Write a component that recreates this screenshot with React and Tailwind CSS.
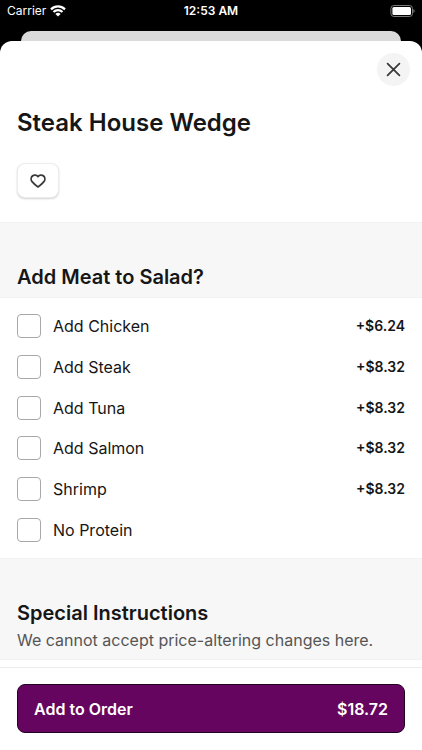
import { useState } from 'react'

const options = [
  { id: 'chicken', name: 'Add Chicken', price: '+$6.24' },
  { id: 'steak', name: 'Add Steak', price: '+$8.32' },
  { id: 'tuna', name: 'Add Tuna', price: '+$8.32' },
  { id: 'salmon', name: 'Add Salmon', price: '+$8.32' },
  { id: 'shrimp', name: 'Shrimp', price: '+$8.32' },
  { id: 'none', name: 'No Protein', price: null },
]

function WifiIcon() {
  return (
    <svg width="16" height="12" viewBox="0 0 16 12" fill="none" stroke="white" strokeWidth="2.2">
      <path d="M1 4.4C5 0.4 11 0.4 15 4.4" />
      <path d="M3.5 7C6 4.5 10 4.5 12.5 7" />
      <path d="M8 11.6L5.4 8.9C6.8 7.5 9.2 7.5 10.6 8.9Z" fill="white" stroke="none" />
    </svg>
  )
}

function BatteryIcon() {
  return (
    <svg width="25" height="12" viewBox="0 0 25 12" fill="none">
      <rect x="0.9" y="0.5" width="21.6" height="11" rx="3" stroke="#7a7a7a" />
      <rect x="2.4" y="2" width="18.6" height="8" rx="1.5" fill="white" />
      <path d="M23.4 4C25 4.6 25 7.4 23.4 8Z" fill="#7a7a7a" />
    </svg>
  )
}

export default function App() {
  const [selected, setSelected] = useState([])
  const [liked, setLiked] = useState(false)

  const toggle = (id) =>
    setSelected(selected.includes(id) ? selected.filter((s) => s !== id) : [...selected, id])

  return (
    <div className="min-h-screen flex flex-col bg-black text-[#161616] font-['Inter',sans-serif]">
      {/* Status Bar */}
      <div className="grid grid-cols-3 items-center h-[22px] px-[7px] text-xs text-white">
        <div className="flex items-center gap-1">
          <span>Carrier</span>
          <WifiIcon />
        </div>
        <span className="text-center font-semibold">12:53 AM</span>
        <div className="flex justify-end">
          <BatteryIcon />
        </div>
      </div>

      {/* Screen behind the sheet */}
      <div className="mt-[9px] mx-[21px] h-[10px] rounded-t-[10px] bg-[#dadada]" />

      {/* Sheet */}
      <main className="flex-1 flex flex-col rounded-t-[12px] bg-white overflow-hidden">
        <div className="flex justify-end pt-3 pr-3">
          <button aria-label="Close" className="w-[33px] h-[33px] rounded-full bg-[#f4f4f4] flex items-center justify-center">
            <svg width="15" height="15" viewBox="0 0 15 15" stroke="#3a3a3a" strokeWidth="1.8" strokeLinecap="round">
              <path d="M1.6 1.6L13.4 13.4M13.4 1.6L1.6 13.4" />
            </svg>
          </button>
        </div>

        <div className="px-[17px] pt-[21px] pb-6">
          <h1 className="text-2xl font-semibold">Steak House Wedge</h1>
          <button
            aria-label="Save to favorites"
            aria-pressed={liked}
            onClick={() => setLiked(!liked)}
            className="mt-6 w-[42px] h-[35px] rounded-lg border border-[#ececec] bg-white shadow-[0_1px_2px_rgba(0,0,0,0.18)] flex items-center justify-center"
          >
            <svg width="16" height="14" viewBox="0 0 16 14" fill={liked ? '#3a3a3a' : 'none'} stroke="#3a3a3a" strokeWidth="1.8" strokeLinejoin="round">
              <path d="M8 2.6C6.6 0.7 4 0.6 2.4 2C0.7 3.6 0.8 6.2 2.3 7.9C3.8 9.7 6 11.6 8 12.9C10 11.6 12.2 9.7 13.7 7.9C15.2 6.2 15.3 3.6 13.6 2C12 0.6 9.4 0.7 8 2.6Z" />
            </svg>
          </button>
        </div>

        {/* Options */}
        <div className="px-[17px] pt-10 pb-1.5 bg-[#f7f7f7] border-y border-[#f1f1f1]">
          <h2 className="text-xl font-semibold">Add Meat to Salad?</h2>
        </div>
        <ul className="grid auto-rows-fr h-[260px] px-[17px] py-2">
          {options.map((option) => (
            <li key={option.id}>
              <label className="h-full flex items-center gap-3">
                <input
                  type="checkbox"
                  checked={selected.includes(option.id)}
                  onChange={() => toggle(option.id)}
                  className="appearance-none w-6 h-6 rounded-[4px] border border-[#a8a8a8] bg-white checked:bg-[#660560]"
                />
                <span className="flex-1 text-base">{option.name}</span>
                {option.price && <span className="text-sm font-semibold">{option.price}</span>}
              </label>
            </li>
          ))}
        </ul>

        {/* Special Instructions */}
        <div className="px-[17px] pt-10 pb-1.5 bg-[#f7f7f7] border-y border-[#f1f1f1]">
          <h2 className="text-xl font-semibold">Special Instructions</h2>
          <p className="text-base leading-[26px] text-[#555555]">We cannot accept price-altering changes here.</p>
        </div>

        {/* Order Bar */}
        <div className="mt-[7px] px-[17px] py-4 border-t border-[#ececec]">
          <button className="w-full h-[49px] px-4 rounded-lg border border-[#240222] bg-[#660560] text-white text-base font-semibold flex items-center justify-between">
            <span>Add to Order</span>
            <span>$18.72</span>
          </button>
        </div>
      </main>
    </div>
  )
}
